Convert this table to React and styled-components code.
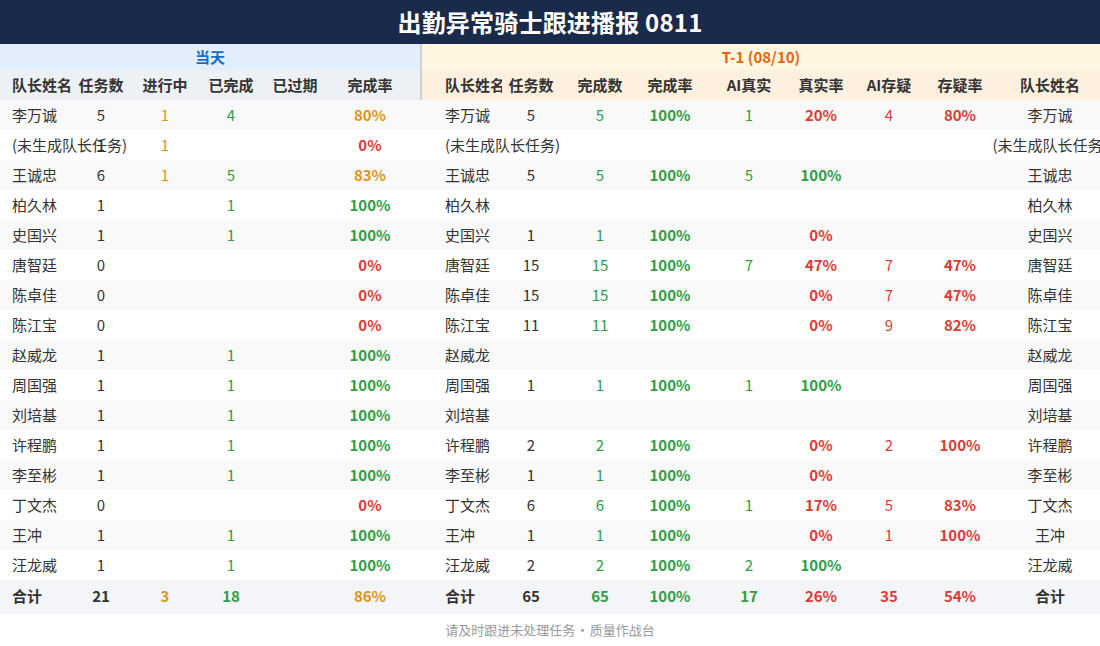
import styled, { createGlobalStyle } from 'styled-components';

const GlobalStyle = createGlobalStyle`
  html, body { margin: 0; padding: 0; background: #fff; }
  body {
    font-family: "Noto Sans CJK SC", "Noto Sans", sans-serif;
    color: #333;
  }
`;

const LEFT_COLS = '72px 58px 70px 62px 66px 84px 8px';
const RIGHT_COLS = '82px 58px 80px 60px 98px 46px 90px 52px 128px';

const tones = {
  dark: '#333333',
  orange: '#e0941a',
  green: '#2e9d46',
  red: '#dc3b36',
};

const Page = styled.div`
  width: 1100px;
  overflow: hidden;
`;

const TitleBar = styled.header`
  height: 44px;
  background: #1a2a4a;
  color: #fff;
  font-size: 24px;
  font-weight: 700;
  line-height: 43px;
  text-align: center;
  letter-spacing: 0.2px;
`;

const SectionRow = styled.div`
  display: flex;
  height: 26px;
`;

const SectionBand = styled.div`
  flex: ${(p) => (p.$side === 'left' ? '0 0 420px' : '1 1 auto')};
  background: ${(p) => (p.$side === 'left' ? '#e2eefb' : '#fef6e1')};
  color: ${(p) => (p.$side === 'left' ? '#1a6cc8' : '#e8650c')};
  border-left: ${(p) => (p.$side === 'right' ? '2px solid #cfcfcf' : 'none')};
  font-size: 15px;
  font-weight: 700;
  line-height: 26px;
  text-align: center;
`;

const Row = styled.div`
  display: grid;
  grid-template-columns: ${LEFT_COLS} ${RIGHT_COLS};
  height: 30px;
  background: ${(p) => p.$bg || '#fff'};
`;

const TotalRow = styled(Row)`
  height: 34px;
  background: #f4f5f9;
`;

const Cell = styled.div`
  box-sizing: border-box;
  white-space: nowrap;
  overflow: visible;
  font-size: 15px;
  line-height: 29px;
  text-align: ${(p) => p.$align || 'center'};
  padding-left: ${(p) => p.$pad || 0}px;
  color: ${(p) => tones[p.$tone || 'dark']};
  font-weight: ${(p) => (p.$bold ? 700 : 400)};
`;

const TotalCell = styled(Cell)`
  line-height: 31px;
  font-weight: 700;
`;

const HeadCell = styled.div`
  box-sizing: border-box;
  white-space: nowrap;
  font-size: 15px;
  font-weight: 700;
  line-height: 29px;
  color: #333;
  text-align: ${(p) => p.$align || 'center'};
  padding-left: ${(p) => p.$pad || 0}px;
  background: ${(p) => (p.$side === 'left' ? '#edf0f5' : '#fdf0df')};
  border-left: ${(p) => (p.$divider ? '2px solid #cfcfcf' : 'none')};
`;

const Footer = styled.footer`
  height: 32px;
  line-height: 31px;
  text-align: center;
  font-size: 13px;
  color: #9a9a9a;
`;

const rows = [
  { name: '李万诚', tasks: 5, prog: 1, done: 4, rate: 80, t1: { tasks: 5, done: 5, rate: 100, aiReal: 1, realRate: 20, aiDoubt: 4, doubtRate: 80 } },
  { name: '(未生成队长任务)', tasks: 1, prog: 1, done: 0, rate: 0, t1: null },
  { name: '王诚忠', tasks: 6, prog: 1, done: 5, rate: 83, t1: { tasks: 5, done: 5, rate: 100, aiReal: 5, realRate: 100 } },
  { name: '柏久林', tasks: 1, prog: 0, done: 1, rate: 100, t1: null },
  { name: '史国兴', tasks: 1, prog: 0, done: 1, rate: 100, t1: { tasks: 1, done: 1, rate: 100, realRate: 0 } },
  { name: '唐智廷', tasks: 0, prog: 0, done: 0, rate: 0, t1: { tasks: 15, done: 15, rate: 100, aiReal: 7, realRate: 47, aiDoubt: 7, doubtRate: 47 } },
  { name: '陈卓佳', tasks: 0, prog: 0, done: 0, rate: 0, t1: { tasks: 15, done: 15, rate: 100, realRate: 0, aiDoubt: 7, doubtRate: 47 } },
  { name: '陈江宝', tasks: 0, prog: 0, done: 0, rate: 0, t1: { tasks: 11, done: 11, rate: 100, realRate: 0, aiDoubt: 9, doubtRate: 82 } },
  { name: '赵威龙', tasks: 1, prog: 0, done: 1, rate: 100, t1: null },
  { name: '周国强', tasks: 1, prog: 0, done: 1, rate: 100, t1: { tasks: 1, done: 1, rate: 100, aiReal: 1, realRate: 100 } },
  { name: '刘培基', tasks: 1, prog: 0, done: 1, rate: 100, t1: null },
  { name: '许程鹏', tasks: 1, prog: 0, done: 1, rate: 100, t1: { tasks: 2, done: 2, rate: 100, realRate: 0, aiDoubt: 2, doubtRate: 100 } },
  { name: '李至彬', tasks: 1, prog: 0, done: 1, rate: 100, t1: { tasks: 1, done: 1, rate: 100, realRate: 0 } },
  { name: '丁文杰', tasks: 0, prog: 0, done: 0, rate: 0, t1: { tasks: 6, done: 6, rate: 100, aiReal: 1, realRate: 17, aiDoubt: 5, doubtRate: 83 } },
  { name: '王冲', tasks: 1, prog: 0, done: 1, rate: 100, t1: { tasks: 1, done: 1, rate: 100, realRate: 0, aiDoubt: 1, doubtRate: 100 } },
  { name: '汪龙威', tasks: 1, prog: 0, done: 1, rate: 100, t1: { tasks: 2, done: 2, rate: 100, aiReal: 2, realRate: 100 } },
];

const todayTone = (rate) => (rate === 100 ? 'green' : rate === 0 ? 'red' : 'orange');
const realTone = (rate) => (rate === 100 ? 'green' : 'red');
const pct = (v) => (v === undefined || v === null ? '' : `${v}%`);
const num = (v) => (v ? v : '');

function DataRow({ row, index }) {
  const t = row.t1 || {};
  return (
    <Row $bg={index % 2 === 0 ? '#f9f9f9' : '#fff'}>
      <Cell $align="left" $pad={12}>{row.name}</Cell>
      <Cell>{row.tasks}</Cell>
      <Cell $tone="orange">{num(row.prog)}</Cell>
      <Cell $tone="green">{num(row.done)}</Cell>
      <Cell />
      <Cell $bold $tone={todayTone(row.rate)}>{pct(row.rate)}</Cell>
      <Cell />
      <Cell $align="left" $pad={25}>{row.name}</Cell>
      <Cell>{num(t.tasks)}</Cell>
      <Cell $tone="green">{num(t.done)}</Cell>
      <Cell $bold $tone="green">{pct(t.rate)}</Cell>
      <Cell $tone="green">{num(t.aiReal)}</Cell>
      <Cell $bold $tone={realTone(t.realRate)}>{pct(t.realRate)}</Cell>
      <Cell $tone="red">{num(t.aiDoubt)}</Cell>
      <Cell $bold $tone="red">{pct(t.doubtRate)}</Cell>
      <Cell>{row.name}</Cell>
    </Row>
  );
}

export default function App() {
  return (
    <Page>
      <GlobalStyle />
      <TitleBar>出勤异常骑士跟进播报 0811</TitleBar>

      <SectionRow>
        <SectionBand $side="left">当天</SectionBand>
        <SectionBand $side="right">T-1 (08/10)</SectionBand>
      </SectionRow>

      <Row>
        <HeadCell $side="left" $align="left" $pad={12}>队长姓名</HeadCell>
        <HeadCell $side="left">任务数</HeadCell>
        <HeadCell $side="left">进行中</HeadCell>
        <HeadCell $side="left">已完成</HeadCell>
        <HeadCell $side="left">已过期</HeadCell>
        <HeadCell $side="left">完成率</HeadCell>
        <HeadCell $side="left" />
        <HeadCell $side="right" $align="left" $pad={23} $divider>队长姓名</HeadCell>
        <HeadCell $side="right">任务数</HeadCell>
        <HeadCell $side="right">完成数</HeadCell>
        <HeadCell $side="right">完成率</HeadCell>
        <HeadCell $side="right">AI真实</HeadCell>
        <HeadCell $side="right">真实率</HeadCell>
        <HeadCell $side="right">AI存疑</HeadCell>
        <HeadCell $side="right">存疑率</HeadCell>
        <HeadCell $side="right">队长姓名</HeadCell>
      </Row>

      {rows.map((row, i) => (
        <DataRow key={row.name} row={row} index={i} />
      ))}

      <TotalRow>
        <TotalCell $align="left" $pad={12}>合计</TotalCell>
        <TotalCell>21</TotalCell>
        <TotalCell $tone="orange">3</TotalCell>
        <TotalCell $tone="green">18</TotalCell>
        <TotalCell />
        <TotalCell $tone="orange">86%</TotalCell>
        <TotalCell />
        <TotalCell $align="left" $pad={25}>合计</TotalCell>
        <TotalCell>65</TotalCell>
        <TotalCell $tone="green">65</TotalCell>
        <TotalCell $tone="green">100%</TotalCell>
        <TotalCell $tone="green">17</TotalCell>
        <TotalCell $tone="red">26%</TotalCell>
        <TotalCell $tone="red">35</TotalCell>
        <TotalCell $tone="red">54%</TotalCell>
        <TotalCell>合计</TotalCell>
      </TotalRow>

      <Footer>请及时跟进未处理任务{'\u200A·\u200A'}质量作战台</Footer>
    </Page>
  );
}
